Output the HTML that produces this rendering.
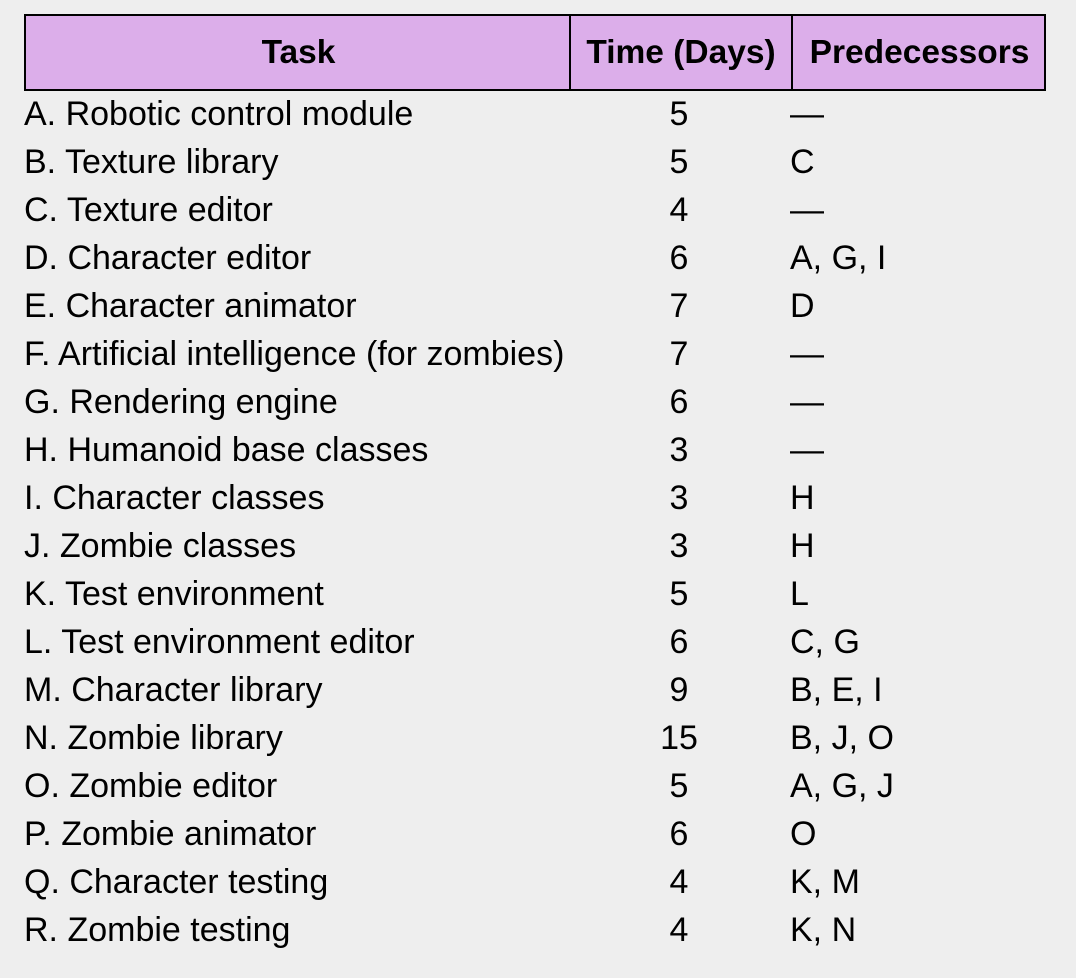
<!DOCTYPE html>
<html><head><meta charset="utf-8"><style>
html,body{margin:0;padding:0;background:#eeeeee;width:1076px;height:978px;overflow:hidden}
body{font-family:"Liberation Sans",Arial,sans-serif;color:#000;position:relative}
.hd{position:absolute;left:24px;top:14px;width:1018px;height:73px;background:#dcaeea;border:2px solid #000}
.hd div{position:absolute;top:0;height:73px;line-height:73px;font-weight:bold;font-size:33.5px;text-align:center}
.vl{position:absolute;top:0;width:2px;height:73px;background:#000}
.r{position:absolute;left:0;width:1076px;height:48px;font-size:34px;line-height:48px}
.r span{position:absolute;top:0;white-space:nowrap}
.a{left:24px}.b{left:640px;width:78px;text-align:center}.c{left:790px}
</style></head><body>
<div class="hd">
<div style="left:0;width:545px">Task</div>
<div class="vl" style="left:543px"></div>
<div style="left:545px;width:220px">Time (Days)</div>
<div class="vl" style="left:765px"></div>
<div style="left:767px;width:253px">Predecessors</div>
</div>
<div class="r" style="top:90px"><span class="a">A. Robotic control module</span><span class="b">5</span><span class="c">—</span></div>
<div class="r" style="top:138px"><span class="a">B. Texture library</span><span class="b">5</span><span class="c">C</span></div>
<div class="r" style="top:186px"><span class="a">C. Texture editor</span><span class="b">4</span><span class="c">—</span></div>
<div class="r" style="top:234px"><span class="a">D. Character editor</span><span class="b">6</span><span class="c">A, G, I</span></div>
<div class="r" style="top:282px"><span class="a">E. Character animator</span><span class="b">7</span><span class="c">D</span></div>
<div class="r" style="top:330px"><span class="a">F. Artificial intelligence (for zombies)</span><span class="b">7</span><span class="c">—</span></div>
<div class="r" style="top:378px"><span class="a">G. Rendering engine</span><span class="b">6</span><span class="c">—</span></div>
<div class="r" style="top:426px"><span class="a">H. Humanoid base classes</span><span class="b">3</span><span class="c">—</span></div>
<div class="r" style="top:474px"><span class="a">I. Character classes</span><span class="b">3</span><span class="c">H</span></div>
<div class="r" style="top:522px"><span class="a">J. Zombie classes</span><span class="b">3</span><span class="c">H</span></div>
<div class="r" style="top:570px"><span class="a">K. Test environment</span><span class="b">5</span><span class="c">L</span></div>
<div class="r" style="top:618px"><span class="a">L. Test environment editor</span><span class="b">6</span><span class="c">C, G</span></div>
<div class="r" style="top:666px"><span class="a">M. Character library</span><span class="b">9</span><span class="c">B, E, I</span></div>
<div class="r" style="top:714px"><span class="a">N. Zombie library</span><span class="b">15</span><span class="c">B, J, O</span></div>
<div class="r" style="top:762px"><span class="a">O. Zombie editor</span><span class="b">5</span><span class="c">A, G, J</span></div>
<div class="r" style="top:810px"><span class="a">P. Zombie animator</span><span class="b">6</span><span class="c">O</span></div>
<div class="r" style="top:858px"><span class="a">Q. Character testing</span><span class="b">4</span><span class="c">K, M</span></div>
<div class="r" style="top:906px"><span class="a">R. Zombie testing</span><span class="b">4</span><span class="c">K, N</span></div>
</body></html>
